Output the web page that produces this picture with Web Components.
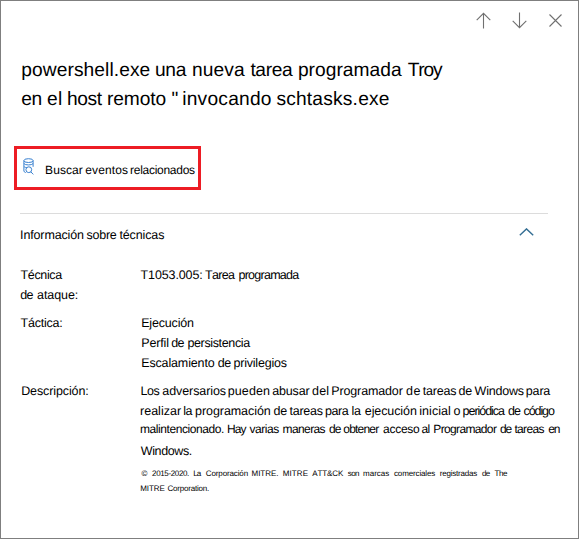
<!DOCTYPE html>
<html lang="es">
<head>
<meta charset="utf-8">
<title>Detalles de la técnica</title>
<style>
html,body{margin:0;background:#fff;overflow:hidden}
body{font-family:"Liberation Sans",Arial,sans-serif;color:#000}
</style>
</head>
<body>
<detail-panel></detail-panel>
<script>
const ctx = document.createElement('canvas').getContext('2d');

// Words are measured enlarged, so that the glyph bounds keep their fractions.
const SCALE = 20;

// One line of text whose words are spaced to the extents listed in "stops";
// "origin" is the left edge of the line's column on the same scale.
class FitLine extends HTMLElement {
  connectedCallback() {
    const size = +this.getAttribute('size') || 12.5;
    const height = this.getAttribute('height') || 20;
    const origin = +this.getAttribute('origin') || 0;
    const words = this.getAttribute('text').split(' ');
    const stops = this.getAttribute('stops').split(' ').map(Number);
    const root = this.attachShadow({mode: 'open'});
    root.innerHTML = `<style>:host{display:block}
      div{font-size:${size}px;height:${height}px;line-height:${height}px;white-space:pre;text-rendering:geometricPrecision;font-kerning:none}</style><div></div>`;
    const line = root.querySelector('div');
    ctx.font = size * SCALE + 'px "Liberation Sans"';
    ctx.fontKerning = 'none';
    ctx.textRendering = 'geometricPrecision';
    const space = ctx.measureText(' ').width / SCALE;
    let end = origin;
    words.forEach((word, i) => {
      // Half a pixel is added at the start and a little taken off the end,
      // since glyphs are painted at whole pixels.
      const a = stops[2 * i] + 0.5, b = stops[2 * i + 1] - 0.1, m = ctx.measureText(word);
      const left = m.actualBoundingBoxLeft / SCALE;
      const start = a + left;
      const ink = m.actualBoundingBoxRight / SCALE + left;
      const ls = word.length > 1 ? (b - a - ink) / (word.length - 1) : 0;
      if (i) {
        const gap = document.createElement('span');
        gap.textContent = ' ';
        gap.style.letterSpacing = (start - end - space) + 'px';
        line.append(gap);
      } else line.style.marginLeft = (start - origin) + 'px';
      const s = document.createElement('span');
      s.textContent = word;
      s.style.letterSpacing = ls + 'px';
      line.append(s);
      end = start + m.width / SCALE + word.length * ls;
    });
  }
}
customElements.define('fit-line', FitLine);

const icons = {
  up: ['0 0 16 17', 16, 17, '<path d="M7.5 16.5V1.5M.7 8.2 7.5 1.4l6.8 6.8"/>'],
  down: ['0 0 16 17', 16, 17, '<path d="M7.5.5v15M.7 8.8l6.8 6.8 6.8-6.8"/>'],
  close: ['0 0 13 13', 13, 13, '<path d="M.5.5l12 12M12.5.5l-12 12"/>'],
  chevron: ['0 0 15 8', 15, 8, '<path d="M.8 7.3 7.5.9l6.7 6.4"/>'],
  search: ['0 0 12 18', 12, 18, '<ellipse cx="5.5" cy="2.6" rx="4.6" ry="1.9"/><path d="M.9 2.6v10.5M10.1 2.6v6.2M.9 5.6c1.2 1.8 8 1.8 9.2 0M.9 8.4c.8 1 2 1.2 3.4 1.2M1 13.1c.2.9.8 1.3 1.7 1.5"/><circle cx="5.8" cy="11.7" r="2.9"/><path d="M7.8 13.8 10.3 16.4"/>']
};
class LineIcon extends HTMLElement {
  connectedCallback() {
    const [box, w, h, body] = icons[this.getAttribute('name')];
    this.attachShadow({mode: 'open'}).innerHTML = `<style>:host{display:block;flex:none}svg{display:block;fill:none;stroke:currentColor;stroke-width:var(--stroke,1.1)}</style><svg width="${w}" height="${h}" viewBox="${box}">${body}</svg>`;
  }
}
customElements.define('line-icon', LineIcon);

class ActionButton extends HTMLElement {
  connectedCallback() {
    this.attachShadow({mode: 'open'}).innerHTML = `<style>
      :host{display:flex;box-sizing:border-box;width:187px;height:44px;margin-left:13px;border:3px solid #ed1c24;padding:9px 0 0 6px}
      line-icon{color:#3b82d0;--stroke:1}
      .label{margin:2px 0 0 8px}
      </style><line-icon name="search"></line-icon><div class="label"><slot></slot></div>`;
  }
}
customElements.define('action-button', ActionButton);

class DetailRow extends HTMLElement {
  connectedCallback() {
    this.attachShadow({mode: 'open'}).innerHTML = `<style>:host{display:grid;grid-template-columns:120px 1fr}</style>
      <div><slot name="label"></slot></div><div><slot></slot></div>`;
  }
}
customElements.define('detail-row', DetailRow);

class DetailPanel extends HTMLElement {
  connectedCallback() {
    this.attachShadow({mode: 'open'}).innerHTML = `<style>
      :host{display:block;box-sizing:border-box;width:579px;height:539px;border:1px solid #7f7f7f;background:#fff}
      nav{display:flex;height:50px;padding:11px 0 0 475px;box-sizing:border-box;color:#707070;margin-bottom:5px}
      nav line-icon+line-icon{margin-left:20px}
      nav line-icon:last-child{margin:2px 0 0 21px}
      h1{margin:0 0 0 20px;height:57px;font-weight:400}
      action-button{margin-top:33px}
      .rule{height:1px;background:#dcdcdc;width:528px;margin:23px 0 0 19px}
      .head{display:flex;justify-content:space-between;width:514px;margin:11px 0 20px 19px;color:#000}
      .head line-icon{color:#356f94;margin-top:3px;--stroke:1.4}
      .rows{margin-left:19px;display:grid;gap:8px}
      </style>
      <nav><line-icon name="up"></line-icon><line-icon name="down"></line-icon><line-icon name="close"></line-icon></nav>
      <h1>
        <fit-line size="19.2" height="29" origin="21" text="powershell.exe una nueva tarea programada Troy" stops="22 149.7 155.7 186.7 192.7 245 250 293 298.7 402 407.7 443"></fit-line>
        <fit-line size="19.2" height="29" origin="21" text='en el host remoto " invocando schtasks.exe' stops="21.3 41.3 47 61 67.8 102.3 107.7 165.7 171.7 176.7 183 271 276.3 389"></fit-line>
      </h1>
      <action-button><fit-line size="12" origin="43" text="Buscar eventos relacionados" stops="45.5 82.7 85.3 127.7 130.3 194.7"></fit-line></action-button>
      <div class="rule"></div>
      <div class="head"><fit-line origin="20" text="Información sobre técnicas" stops="20.7 83.3 86.3 116.3 119 164"></fit-line><line-icon name="chevron"></line-icon></div>
      <div class="rows">
        <detail-row>
          <fit-line slot="label" origin="20" text="Técnica" stops="20.3 62.3"></fit-line>
          <fit-line slot="label" origin="20" text="de ataque:" stops="20.3 33 37 77.3"></fit-line>
          <fit-line origin="140" text="T1053.005: Tarea programada" stops="140.3 201.7 204.7 235 238.7 299.3"></fit-line>
        </detail-row>
        <detail-row>
          <fit-line slot="label" origin="20" text="Táctica:" stops="20.3 61.7"></fit-line>
          <fit-line origin="140" text="Ejecución" stops="141.7 193.3"></fit-line>
          <fit-line origin="140" text="Perfil de persistencia" stops="141.7 168.3 171.3 184 187.7 250.3"></fit-line>
          <fit-line origin="140" text="Escalamiento de privilegios" stops="141.7 214.3 217.7 230.7 233.7 286.7"></fit-line>
        </detail-row>
        <detail-row>
          <fit-line slot="label" origin="20" text="Descripción:" stops="21.7 87.7"></fit-line>
          <fit-line origin="140" text="Los adversarios pueden abusar del Programador de tareas de Windows para" stops="141 159.5 162.3 225.7 228 269.3 272.3 309.5 312 328.3 331.7 402.7 406 420 422.3 456 458.3 471.7 474 523.5 526 550.3"></fit-line>
          <fit-line origin="140" text="realizar la programación de tareas para la ejecución inicial o periódica de código" stops="140.3 181 183.5 192.5 195.3 270 273.5 286.7 289 322.7 325.3 348.7 351.7 361 364.7 416 419.3 450 453.3 459.3 462.7 505 507.7 520.3 523.3 554.3"></fit-line>
          <fit-line size="12" height="17" origin="140" text="malintencionado. Hay varias maneras de obtener acceso al Programador de tareas en" stops="140.3 223.3 227.5 246.7 249 279 282.7 325.3 329 341 343.3 379 383 419.3 421.3 429.3 433.7 496.7 500 511.7 514 544 548 559.7"></fit-line>
          <fit-line height="26" origin="140" text="Windows." stops="140.3 191.3"></fit-line>
          <fit-line size="8" height="19" origin="140" text="© 2015-2020. La Corporación MITRE. MITRE ATT&amp;CK son marcas comerciales registradas de The" stops="141 147.3 152 188.7 193.3 201.3 205.7 247.7 251.7 277.7 282.7 307.7 311.7 343.3 347.3 359 363 389 393.7 435 439.7 477 481.7 489.7 494 507"></fit-line>
          <fit-line size="8" height="12" origin="140" text="MITRE Corporation." stops="140.3 164.7 167.3 208.7"></fit-line>
        </detail-row>
      </div>`;
  }
}
customElements.define('detail-panel', DetailPanel);
</script>
</body>
</html>
